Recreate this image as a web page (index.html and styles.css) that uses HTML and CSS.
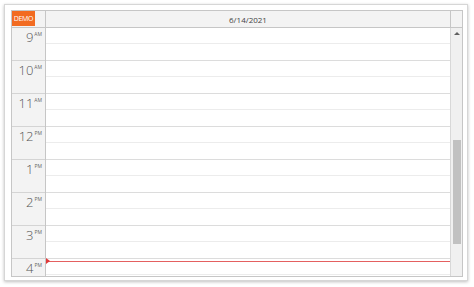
FILE: index.html
```html
<!DOCTYPE html>
<html>
<head>
  <title>Calendar</title>
  <link rel="stylesheet" href="styles.css">
</head>
<body>
  <div class="frame">
    <div class="calendar">
      <div class="cal-header">
        <div class="corner"><span class="demo">DEMO</span></div>
        <div class="day-title">6/14/2021</div>
        <div class="header-gap"></div>
      </div>
      <div class="cal-body">
        <div class="hours">
          <div class="hour"><span class="num">9</span><span class="ampm">AM</span></div>
          <div class="hour"><span class="num">10</span><span class="ampm">AM</span></div>
          <div class="hour"><span class="num">11</span><span class="ampm">AM</span></div>
          <div class="hour"><span class="num">12</span><span class="ampm">PM</span></div>
          <div class="hour"><span class="num">1</span><span class="ampm">PM</span></div>
          <div class="hour"><span class="num">2</span><span class="ampm">PM</span></div>
          <div class="hour"><span class="num">3</span><span class="ampm">PM</span></div>
          <div class="hour"><span class="num">4</span><span class="ampm">PM</span></div>
        </div>
        <div class="cells">
          <div class="cell half-a"></div><div class="cell half-b"></div>
          <div class="cell half-a"></div><div class="cell half-b"></div>
          <div class="cell half-a"></div><div class="cell half-b"></div>
          <div class="cell half-a"></div><div class="cell half-b"></div>
          <div class="cell half-a"></div><div class="cell half-b"></div>
          <div class="cell half-a"></div><div class="cell half-b"></div>
          <div class="cell half-a"></div><div class="cell half-b"></div>
          <div class="cell half-a"></div><div class="cell half-b"></div>
          <div class="now-line"></div>
        </div>
        <div class="scrollbar">
          <div class="arrow-up"></div>
          <div class="thumb"></div>
        </div>
      </div>
    </div>
  </div>
</body>
</html>
```

FILE: styles.css
```css
/* calendar widget */
body {
  margin: 0;
  background-color: white;
  font-family: "Open Sans", "Noto Sans", sans-serif;
}

.frame {
  margin: 4px;
  width: 452px;
  height: 267px;
  border: 1px solid #d6d6d6;
  box-shadow: 0 1px 3px rgba(0, 0, 0, 0.25);
  padding: 5px 4px 3px 6px;
  display: flex;
}

.calendar {
  flex: 1;
  border: 1px solid #c6c6c6;
  display: flex;
  flex-direction: column;
  overflow: hidden;
}

.cal-header {
  display: flex;
  height: 16px;
  border-bottom: 1px solid #c6c6c6;
  background-color: #f3f3f3;
}

.corner {
  width: 33px;
  border-right: 1px solid #c6c6c6;
}

.demo {
  display: block;
  width: 23px;
  height: 15px;
  background-color: #f26b21;
  color: white;
  font-size: 7px;
  line-height: 15px;
  text-align: center;
  letter-spacing: -0.3px;
}

.day-title {
  flex: 1;
  text-align: center;
  font-size: 8px;
  line-height: 17px;
  color: #444;
}

.header-gap {
  width: 11px;
  border-left: 1px solid #c6c6c6;
}

.cal-body {
  flex: 1;
  display: flex;
  overflow: hidden;
}

.hours {
  width: 33px;
  border-right: 1px solid #c6c6c6;
  background-color: #f3f3f3;
}

.hour {
  height: 32px;
  border-bottom: 1px solid #d4d4d4;
  text-align: right;
  padding-right: 3px;
  color: #555;
  line-height: 16px;
}

.num {
  font-size: 13px;
  font-weight: 300;
}

.ampm {
  font-size: 5px;
  line-height: 0;
  vertical-align: 6px;
  margin-left: 1px;
  color: #666;
}

.cells {
  flex: 1;
  position: relative;
  background-color: white;
}

.cell {
  box-sizing: border-box;
}

.half-a {
  height: 16px;
  border-bottom: 1px solid #ececec;
}

.half-b {
  height: 17px;
  border-bottom: 1px solid #dcdcdc;
}

.now-line {
  position: absolute;
  top: 233px;
  left: 0;
  right: 0;
  height: 1px;
  background-color: #e46060;
}

.now-line::before {
  content: "";
  position: absolute;
  left: 0;
  top: -3px;
  border-top: 3px solid transparent;
  border-bottom: 3px solid transparent;
  border-left: 4px solid #e03a3a;
}

.scrollbar {
  width: 11px;
  border-left: 1px solid #d8d8d8;
  background-color: #f0f0f0;
}

.arrow-up {
  margin: 4px auto 0;
  width: 0;
  height: 0;
  border-left: 3px solid transparent;
  border-right: 3px solid transparent;
  border-bottom: 3px solid #606060;
}

.thumb {
  margin: 105px auto 0;
  width: 8px;
  height: 104px;
  background-color: #c1c1c1;
}
```
